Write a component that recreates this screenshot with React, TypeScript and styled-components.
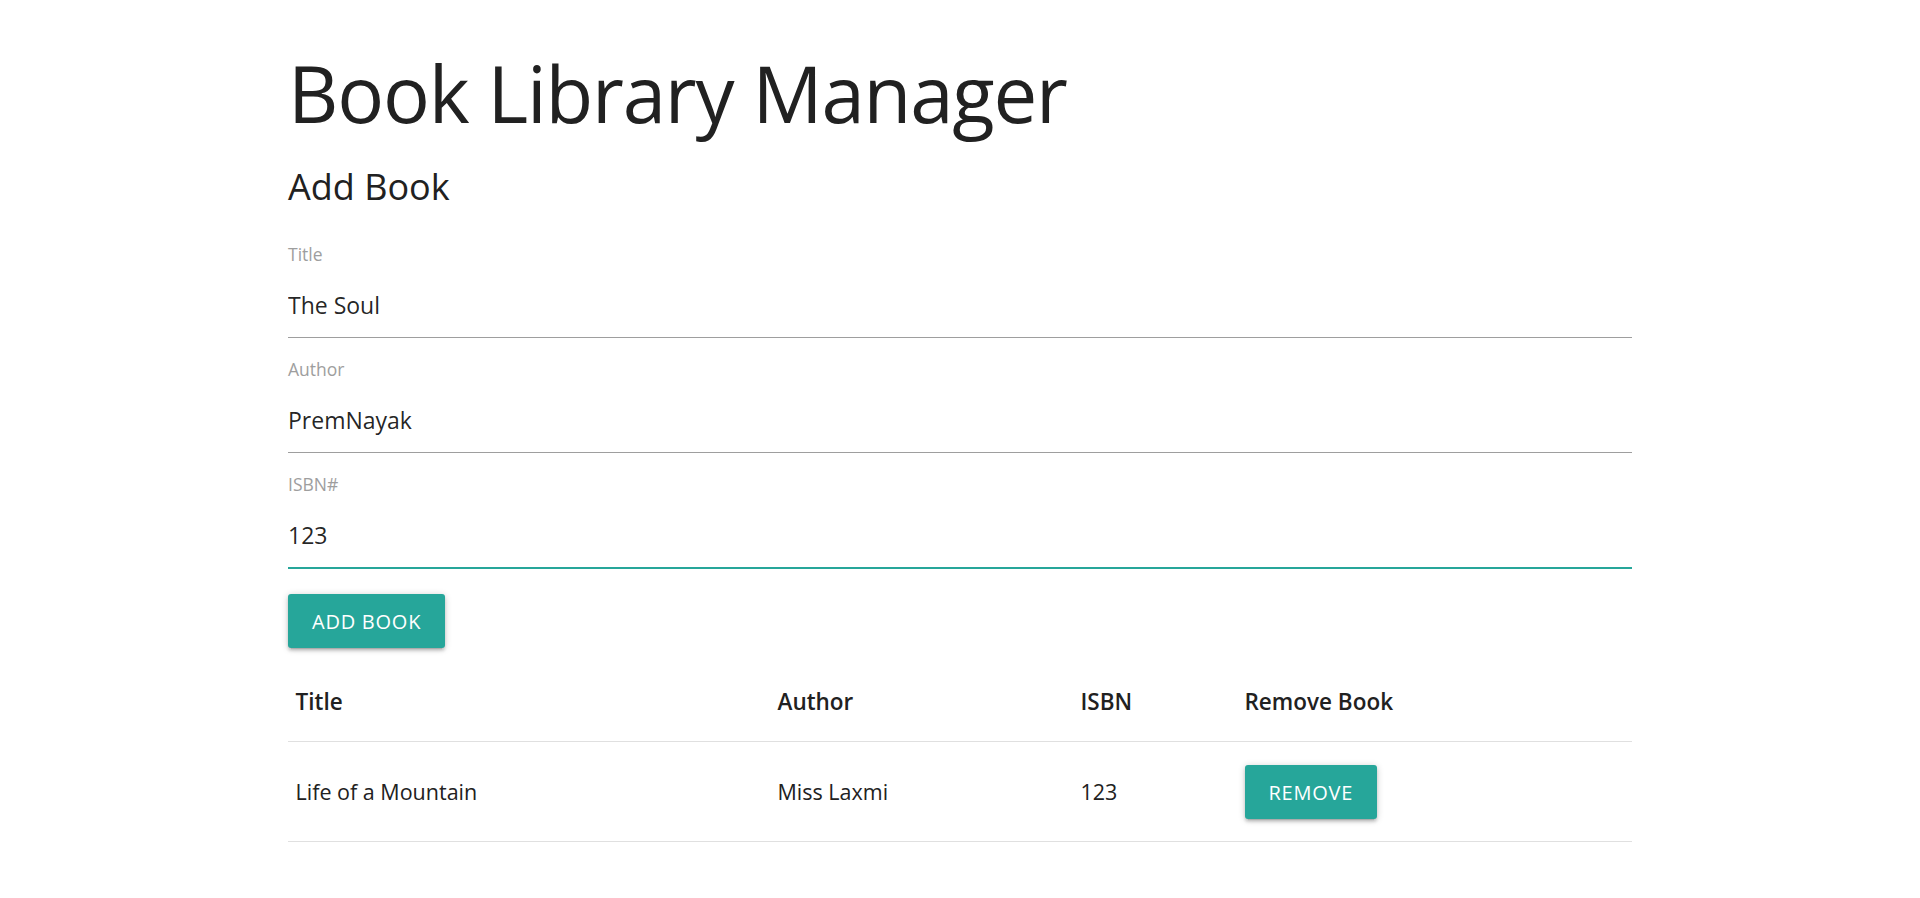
import React from "react";
import styled, { createGlobalStyle } from "styled-components";

const GlobalStyle = createGlobalStyle`
  html, body {
    margin: 0;
    padding: 0;
    background: #ffffff;
  }
  body {
    font-family: "Open Sans", "Noto Sans", sans-serif;
    color: rgba(0, 0, 0, 0.87);
  }
  * {
    box-sizing: border-box;
  }
`;

const Container = styled.div`
  width: 1344px;
  margin: 0 auto;
  display: flex;
  flex-direction: column;
  align-items: stretch;
`;

const PageTitle = styled.h1`
  margin: 49px 0 0 0;
  font-size: 78px;
  line-height: 88px;
  letter-spacing: -1.2px;
  font-weight: 400;
  color: #212121;
`;

const SectionTitle = styled.h4`
  margin: 30px 0 36px 0;
  font-size: 36px;
  line-height: 40px;
  font-weight: 400;
  color: #212121;
`;

const Form = styled.form`
  display: flex;
  flex-direction: column;
  align-items: stretch;
`;

const Field = styled.div`
  display: flex;
  flex-direction: column;
  margin-bottom: 20px;
`;

const Label = styled.label`
  font-size: 17.5px;
  line-height: 22px;
  color: #9e9e9e;
  margin-bottom: 8px;
`;

const Input = styled.input<{ $focused?: boolean }>`
  height: 65px;
  padding: 0;
  margin: 0;
  border: none;
  border-bottom: 1px solid ${(p) => (p.$focused ? "#26a69a" : "#9e9e9e")};
  box-shadow: ${(p) => (p.$focused ? "0 1px 0 0 #26a69a" : "none")};
  outline: none;
  background: transparent;
  font-family: inherit;
  font-size: 23px;
  color: rgba(0, 0, 0, 0.87);
  width: 100%;
`;

const Button = styled.button`
  display: inline-flex;
  align-items: center;
  justify-content: center;
  height: 54px;
  padding: 0 24px;
  border: none;
  border-radius: 3px;
  background: #26a69a;
  color: #ffffff;
  font-family: inherit;
  font-size: 20px;
  letter-spacing: 0.75px;
  text-transform: uppercase;
  cursor: pointer;
  box-shadow: 0 3px 3px 0 rgba(0, 0, 0, 0.14), 0 4px 1px -3px rgba(0, 0, 0, 0.12),
    0 1px 7px 0 rgba(0, 0, 0, 0.2);
`;

const AddButton = styled(Button)`
  align-self: flex-start;
  margin-top: 6px;
`;

const Table = styled.table`
  width: 100%;
  margin-top: 12px;
  border-collapse: collapse;
  table-layout: fixed;
  color: #212121;
`;

const HeadCell = styled.th`
  text-align: left;
  font-size: 22.5px;
  font-weight: 600;
  line-height: 36px;
  padding: 24px 7.5px 21px 7.5px;
  border-bottom: 1px solid #e0e0e0;
`;

const BodyCell = styled.td`
  text-align: left;
  font-size: 21.5px;
  line-height: 36px;
  padding: 23px 7.5px 22px 7.5px;
  vertical-align: middle;
  border-bottom: 1px solid #e0e0e0;
`;

const Col = styled.col<{ $w: number }>`
  width: ${(p) => p.$w}px;
`;

const books = [{ title: "Life of a Mountain", author: "Miss Laxmi", isbn: "123" }];

export default function App() {
  return (
    <>
      <GlobalStyle />
      <Container>
        <PageTitle>Book Library Manager</PageTitle>
        <SectionTitle>Add Book</SectionTitle>
        <Form onSubmit={(e) => e.preventDefault()}>
          <Field>
            <Label htmlFor="title">Title</Label>
            <Input id="title" type="text" defaultValue="The Soul" />
          </Field>
          <Field>
            <Label htmlFor="author">Author</Label>
            <Input id="author" type="text" defaultValue="PremNayak" />
          </Field>
          <Field>
            <Label htmlFor="isbn">ISBN#</Label>
            <Input id="isbn" type="text" defaultValue="123" $focused />
          </Field>
          <AddButton type="submit">Add Book</AddButton>
        </Form>
        <Table>
          <colgroup>
            <Col $w={482} />
            <Col $w={303} />
            <Col $w={164} />
            <Col $w={395} />
          </colgroup>
          <thead>
            <tr>
              <HeadCell>Title</HeadCell>
              <HeadCell>Author</HeadCell>
              <HeadCell>ISBN</HeadCell>
              <HeadCell>Remove Book</HeadCell>
            </tr>
          </thead>
          <tbody>
            {books.map((b) => (
              <tr key={b.isbn + b.title}>
                <BodyCell>{b.title}</BodyCell>
                <BodyCell>{b.author}</BodyCell>
                <BodyCell>{b.isbn}</BodyCell>
                <BodyCell>
                  <Button type="button">Remove</Button>
                </BodyCell>
              </tr>
            ))}
          </tbody>
        </Table>
      </Container>
    </>
  );
}
